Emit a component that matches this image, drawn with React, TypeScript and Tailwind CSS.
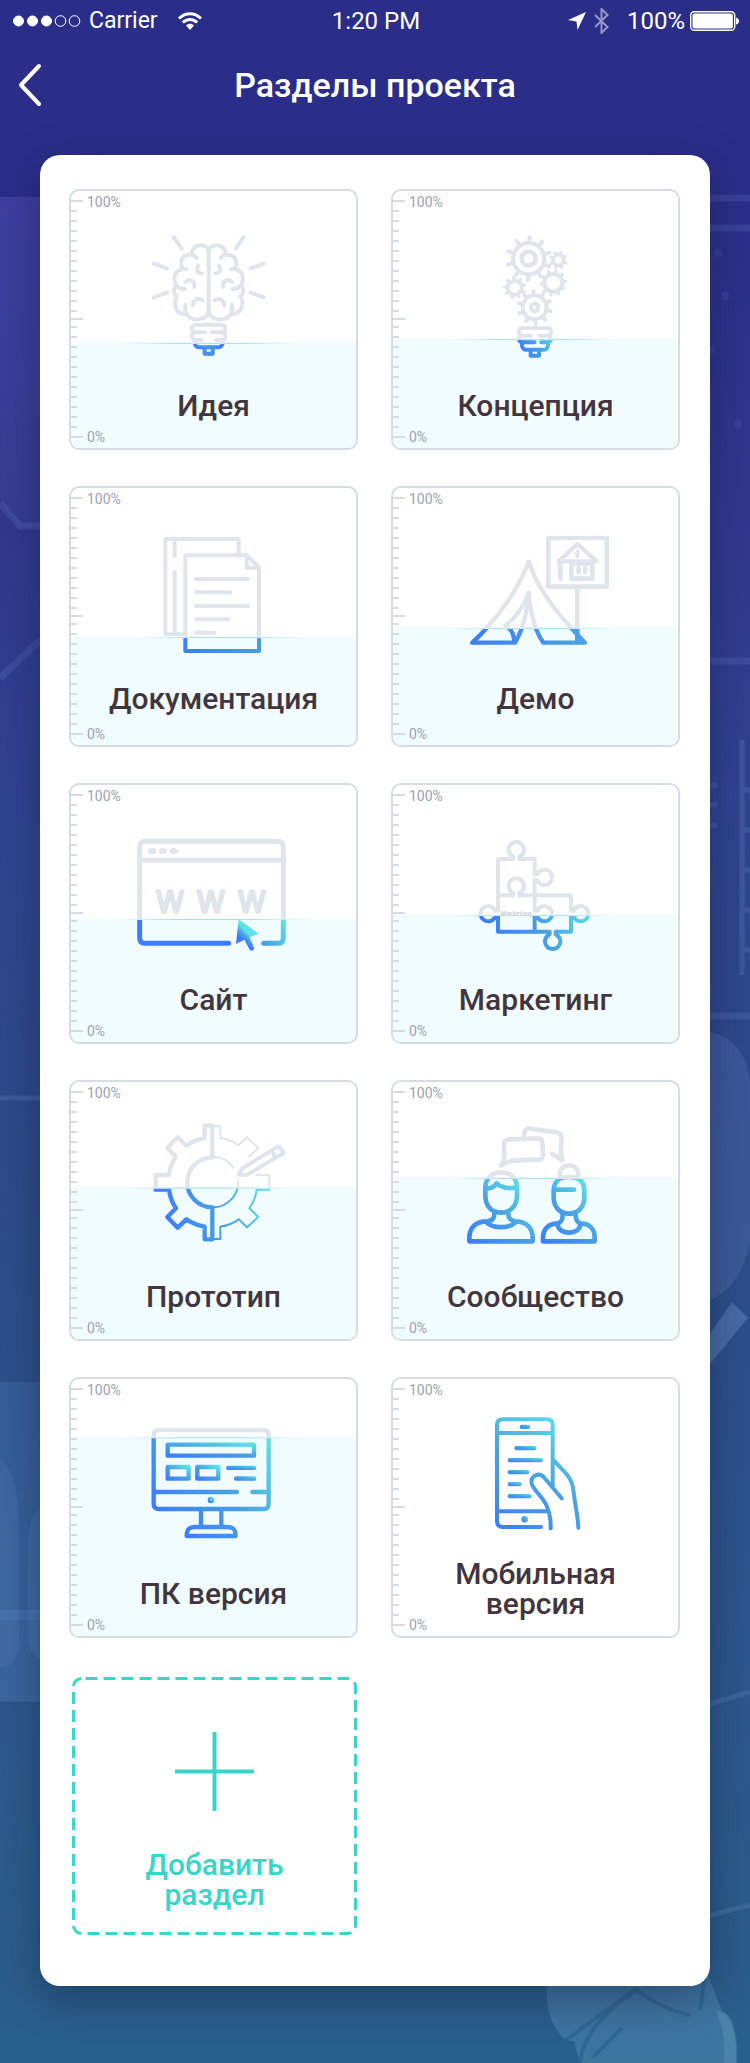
import React from "react";

const GREY = "#e0e5eb";
const BLUE = "#3d7dfb";
const CYAN = "#5ce3e6";

type Box = [number, number, number, number];

function Stops() {
  return (
    <>
      <stop offset="0" stopColor={BLUE} />
      <stop offset="0.5" stopColor="#4aa0e2" />
      <stop offset="1" stopColor={CYAN} />
    </>
  );
}

interface ArtworkProps {
  id: string;
  view: Box;
  className: string;
  level?: number;
  line?: [number, number];
  ramp: Box;
  width?: number;
  art: React.ReactNode;
  children?: React.ReactNode;
}

/** An outline drawing: grey above the water level, blue-to-cyan below it. */
function Artwork({ id, view, className, level, line, ramp, width = 12, art, children }: ArtworkProps) {
  const [x, y, w, h] = view;
  const surface = level ?? y;
  return (
    <svg
      viewBox={view.join(" ")}
      preserveAspectRatio="xMidYMin meet"
      className={"relative block w-full shrink-0 " + className}
      fill="none"
      strokeLinecap="round"
      strokeLinejoin="round"
      aria-hidden="true"
    >
      <defs>
        <linearGradient id={id + "-ink"} gradientUnits="userSpaceOnUse" x1={ramp[0]} y1={ramp[1]} x2={ramp[2]} y2={ramp[3]}>
          <Stops />
        </linearGradient>
        <linearGradient id={id + "-glow"}>
          <stop offset="0" stopColor="#a5e2f4" stopOpacity="0" />
          <stop offset="0.3" stopColor="#a5e2f4" />
          <stop offset="0.7" stopColor="#a5e2f4" />
          <stop offset="1" stopColor="#a5e2f4" stopOpacity="0" />
        </linearGradient>
        <clipPath id={id + "-dry"}>
          <rect x={x} y={y} width={w} height={surface - y} />
        </clipPath>
        <clipPath id={id + "-wet"}>
          <rect x={x} y={surface} width={w} height={y + h - surface} />
        </clipPath>
      </defs>
      {line && <rect x={line[0]} y={surface - 3} width={line[1] - line[0]} height="3" fill={`url(#${id}-glow)`} />}
      <g clipPath={`url(#${id}-dry)`} stroke={GREY} strokeWidth={width}>
        {art}
      </g>
      <g clipPath={`url(#${id}-wet)`} stroke={`url(#${id}-ink)`} strokeWidth={width}>
        {art}
      </g>
      {children}
    </svg>
  );
}

function Teeth({ cx, cy, from, to, count, turn = 0 }: { cx: number; cy: number; from: number; to: number; count: number; turn?: number }) {
  const d = Array.from({ length: count }, (_, i) => {
    const a = ((turn + (360 / count) * i - 90) * Math.PI) / 180;
    const c = Math.cos(a);
    const s = Math.sin(a);
    return `M${cx + from * c} ${cy + from * s}L${cx + to * c} ${cy + to * s}`;
  }).join("");
  return <path d={d} />;
}

function BrainHalf() {
  return (
    <path d="M506 243C501 221 460 217 455 250M470 264C460 249 424 250 423 280C423 291 430 298 439 298M424 299C401 304 399 330 409 344C414 353 424 357 435 357M408 346C399 356 400 370 411 379M409 380C400 400 404 431 436 433M436 404C434 420 437 432 444 438C462 455 503 452 506 420M475 287C467 301 473 310 486 310M436 336C450 325 466 334 463 351M459 406C458 390 474 382 488 391M401 201L425 236M341 281L381 295M341 382L381 368M506 464H466Q456 464 456 475Q456 486 466 487H496M466 487Q456 489 456 499Q456 510 466 510H485M464 512Q463 532 478 532H506M494 537V551H506" />
  );
}

function IdeaArt() {
  return (
    <Artwork
      id="idea"
      view={[93, 63, 855, 600]}
      className="h-[200px]"
      level={522}
      line={[256, 756]}
      ramp={[462, 552, 590, 500]}
      art={
        <>
          <BrainHalf />
          <g transform="translate(1012 0) scale(-1 1)">
            <BrainHalf />
          </g>
          <path d="M506 240V424" />
        </>
      }
    />
  );
}

function ConceptArt() {
  return (
    <Artwork
      id="concept"
      view={[39, 63, 855, 600]}
      className="h-[200px]"
      level={510}
      line={[210, 710]}
      ramp={[425, 560, 530, 500]}
      art={
        <>
          <circle cx="446" cy="266" r="47" />
          <circle cx="446" cy="266" r="21" strokeWidth="14" />
          <Teeth cx={446} cy={266} from={50} to={65} count={10} turn={2} />
          <circle cx="535" cy="270" r="16" strokeWidth="11" />
          <g strokeWidth="10">
            <Teeth cx={535} cy={270} from={18} to={24} count={8} turn={20} />
          </g>
          <circle cx="520" cy="338" r="27" />
          <g strokeWidth="10">
            <Teeth cx={520} cy={338} from={30} to={37} count={10} turn={12} />
          </g>
          <circle cx="404" cy="353" r="21" />
          <g strokeWidth="10">
            <Teeth cx={404} cy={353} from={24} to={30} count={9} turn={-5} />
          </g>
          <circle cx="464" cy="412" r="36" />
          <circle cx="464" cy="412" r="11" strokeWidth="13" />
          <Teeth cx={464} cy={412} from={38} to={49} count={10} turn={-4} />
          <path d="M465 474H427Q417 474 417 485Q417 496 427 497H453M465 474H503Q513 474 513 485Q513 496 503 497H477M427 497Q417 499 417 507Q418 517 430 517H464M503 497Q513 499 513 507Q512 517 500 517H484M426 517Q424 538 437 539H493Q506 538 504 517M452 543V557H477V543" />
        </>
      }
    />
  );
}

function DocsArt() {
  return (
    <Artwork
      id="docs"
      view={[93, 54, 855, 588]}
      className="h-[196px]"
      level={504}
      line={[298, 790]}
      ramp={[436, 560, 840, 330]}
      art={
        <>
          <path d="M596 252V207H376V493H432M404 210V258M404 306V490" />
          <path d="M436 256H620L657 293V543H436Z" />
          <path d="M620 256V293H657M468 327H624M468 367H571M468 408H624M468 448H565M468 488H524" />
        </>
      }
    />
  );
}

function DemoArt() {
  return (
    <Artwork
      id="demo"
      view={[39, 54, 855, 588]}
      className="h-[196px]"
      level={477}
      line={[208, 704]}
      ramp={[290, 540, 850, 330]}
      width={13}
      art={
        <>
          <path d="M446 275C418 350 360 440 277 518H405C428 480 441 430 446 368C451 430 463 480 490 518H615C540 440 478 370 446 275Z" />
          <path d="M446 368C430 410 405 445 376 467C394 476 402 492 403 516" />
          <path d="M505 204H680V350H505ZM592 352V516" strokeWidth="14" />
          <path d="M592 222L536 274H650ZM592 245V258" />
          <path d="M541 278V326M574 280H637V326H574ZM596 294V306M615 294V306" strokeWidth="14" />
        </>
      }
    />
  );
}

function SiteArt() {
  return (
    <Artwork
      id="site"
      view={[93, 45, 855, 600]}
      className="h-[200px]"
      level={450}
      line={[230, 810]}
      ramp={[590, 540, 735, 450]}
      width={15}
      art={
        <>
          <path d="M566 520H315Q299 520 299 504V230Q299 214 315 214H714Q730 214 730 230V504Q730 520 714 520H671M299 271H730" />
          <path d="M332 243H340M365 243H373M397 243H405" strokeWidth="17" />
        </>
      }
    >
      <defs>
        <linearGradient id="site-arrow" gradientUnits="userSpaceOnUse" x1="600" y1="502" x2="618" y2="484">
          <Stops />
        </linearGradient>
      </defs>
      <g
        fill={GREY}
        stroke={GREY}
        strokeWidth="10"
        fontSize="116"
        fontWeight="200"
        textAnchor="middle"
        style={{ fontFamily: '"DejaVu Sans", sans-serif' }}
      >
        <text x="392" y="426">w</text>
        <text x="514" y="426">w</text>
        <text x="637" y="426">w</text>
      </g>
      <path d="M596 448L656 491L629 502L641 530A7 7 0 0 1 628 538L613 509L588 522Z" fill="url(#site-arrow)" />
    </Artwork>
  );
}

function MarketingArt() {
  return (
    <Artwork
      id="marketing"
      view={[39, 45, 855, 600]}
      className="h-[200px]"
      level={438}
      line={[214, 714]}
      ramp={[340, 520, 640, 410]}
      art={
        <>
          <path d="M354 376V267H400V260A23 23 0 1 1 418 260V267H464V313H472A23 23 0 1 1 472 331H464V376" />
          <path d="M354 376H400V369A23 23 0 1 1 418 369V376H573V422H581A23 23 0 1 1 581 440H573V485H527V493A23 23 0 1 1 509 493V485H354V440H346A23 23 0 1 1 346 422H354Z" />
          <path d="M464 376V422H472A23 23 0 1 1 472 440H464V485" />
        </>
      }
    >
      <text
        x="408"
        y="437"
        fontSize="18"
        fontWeight="900"
        fill="#d3dae2"
        textAnchor="middle"
        style={{ fontFamily: "Inter, sans-serif" }}
      >
        Marketing
      </text>
    </Artwork>
  );
}

function PrototypeArt() {
  return (
    <Artwork
      id="prototype"
      view={[93, 36, 855, 600]}
      className="h-[200px]"
      level={356}
      line={[254, 754]}
      ramp={[375, 470, 690, 350]}
      width={13}
      art={
        <>
          <path d="M517 166H494V204C472 208 455 216 439 227L413 202L382 233L407 260C396 277 389 295 387 315H347V359H387C390 380 396 398 408 415L382 441L413 473L439 448C455 458 472 466 494 470V508H517M517 166V262A75 75 0 0 0 517 412V508" />
          <path
            d="M517 168H541V204C560 207 580 215 596 226L621 202L655 234L627 260M649 315H688V359H650C648 380 640 398 628 415L655 441L621 472L596 448C580 460 560 467 541 470V507H517M517 261C542 260 566 272 580 293M594 332A75 75 0 0 1 517 412"
            strokeWidth="6"
          />
          <path d="M596 314L606 296L713 230Q717 228 720 232L731 249L622 314ZM694 242L706 262" strokeWidth="12" />
        </>
      }
    />
  );
}

function CommunityArt() {
  const woman = (
    <>
      <path d="M567 321C598 321 613 336 613 362V382C613 414 592 431 567 431S521 414 521 382V362C521 336 538 321 567 321ZM525 359H582M540 316C536 276 598 276 594 316" />
      <path d="M548 434C548 448 546 458 530 461C505 461 489 478 489 503V514H644V503C644 478 630 461 604 461C590 458 587 448 587 434M532 464C540 496 594 496 602 464" />
    </>
  );
  return (
    <Artwork
      id="community"
      view={[39, 36, 855, 600]}
      className="h-[200px]"
      level={327}
      line={[200, 710]}
      ramp={[270, 514, 430, 330]}
      width={14}
      art={
        <>
          <path d="M363 307C393 307 411 325 411 355V375C411 410 390 428 363 428S316 410 316 375V355C316 325 335 307 363 307ZM316 354C332 358 341 352 350 340C362 352 385 356 411 353" />
          <path d="M343 430C343 444 340 451 322 454C285 454 268 474 268 505V514H458V505C458 474 440 454 405 454C390 451 385 444 385 430M320 457C338 476 388 476 406 457" />
          <path d="M385 209L472 205Q486 205 487 218L489 252Q489 268 475 269L405 271Q385 273 364 287Q374 268 373 255L372 225Q372 210 385 209ZM432 200C432 180 438 175 448 176L530 187Q545 190 545 205C543 225 540 245 547 271Q532 261 516 252" />
        </>
      }
    >
      <defs>
        <linearGradient id="woman-ink" gradientUnits="userSpaceOnUse" x1="495" y1="514" x2="635" y2="345">
          <Stops />
        </linearGradient>
      </defs>
      <g clipPath="url(#community-dry)" stroke={GREY} strokeWidth="14">
        {woman}
      </g>
      <g clipPath="url(#community-wet)" stroke="url(#woman-ink)" strokeWidth="14">
        {woman}
      </g>
    </Artwork>
  );
}

function DesktopArt() {
  return (
    <Artwork
      id="desktop"
      view={[6, 6, 855, 600]}
      className="h-[200px]"
      level={184}
      line={[166, 700]}
      ramp={[300, 440, 600, 180]}
      width={13}
      art={
        <>
          <path d="M270 159H583Q599 159 599 175V380Q599 396 583 396H270Q254 396 254 380V175Q254 159 270 159ZM254 345H504M550 345H599" />
          <path d="M396 398V446M457 398V446M353 477C353 455 362 450 380 450H473C491 450 500 455 500 477Z" />
        </>
      }
    >
      <defs>
        <linearGradient id="desktop-part" x1="0" y1="1" x2="1" y2="0">
          <Stops />
        </linearGradient>
      </defs>
      <g stroke="url(#desktop-part)" strokeWidth="13">
        <rect x="296" y="203" width="259" height="33" />
        <rect x="296" y="270" width="63" height="35" />
        <rect x="385" y="270" width="63" height="35" />
        <circle cx="426" cy="369" r="6" strokeWidth="8" />
      </g>
      <g fill="url(#desktop-part)">
        <rect x="471" y="266" width="91" height="13" rx="6" />
        <rect x="495" y="298" width="67" height="13" rx="6" />
      </g>
    </Artwork>
  );
}

function MobileArt() {
  return (
    <Artwork
      id="mobile"
      view={[6, 6, 855, 540]}
      className="h-[180px]"
      ramp={[300, 450, 530, 130]}
      art={
        <path d="M450 450H336Q318 450 318 432V145Q318 127 336 127H467Q485 127 485 145V328M318 168H485M318 403H466M512 364L460 302C445 284 417 296 422 320C425 335 450 355 464 380C476 405 480 425 479 454M487 249L525 289C540 306 546 320 548 345C552 385 560 410 562 452" />
      }
    >
      <defs>
        <linearGradient id="mobile-part" x1="0" y1="1" x2="1" y2="0">
          <Stops />
        </linearGradient>
      </defs>
      <g fill="url(#mobile-part)">
        <rect x="386" y="143" width="32" height="13" rx="6" />
        <rect x="370" y="207" width="66" height="13" rx="6" />
        <rect x="350" y="243" width="106" height="13" rx="6" />
        <rect x="350" y="279" width="65" height="13" rx="6" />
        <rect x="350" y="315" width="42" height="13" rx="6" />
        <rect x="350" y="351" width="72" height="13" rx="6" />
        <circle cx="401" cy="427" r="10" />
      </g>
    </Artwork>
  );
}

interface Section {
  title: string;
  water: number;
  Art: () => React.ReactElement;
}

const SECTIONS: Section[] = [
  { title: "Идея", water: 106, Art: IdeaArt },
  { title: "Концепция", water: 109, Art: ConceptArt },
  { title: "Документация", water: 108, Art: DocsArt },
  { title: "Демо", water: 118, Art: DemoArt },
  { title: "Сайт", water: 123, Art: SiteArt },
  { title: "Маркетинг", water: 127, Art: MarketingArt },
  { title: "Прототип", water: 152, Art: PrototypeArt },
  { title: "Сообщество", water: 162, Art: CommunityArt },
  { title: "ПК версия", water: 199, Art: DesktopArt },
  { title: "Мобильная версия", water: 0, Art: MobileArt },
];

const TICKS = [
  ...Array.from({ length: 12 }, (_, i) => 10 + i * 10),
  ...Array.from({ length: 12 }, (_, i) => 136 + i * 10),
];

function Ruler() {
  return (
    <>
      <svg className="absolute top-0 left-0 h-[257px] w-3" stroke="#d6dce1" strokeWidth="2" aria-hidden="true">
        {TICKS.map((y, i) => (
          <path key={y} d={`M0 ${y}H${i === 0 || i === TICKS.length - 1 ? 12 : 6}`} />
        ))}
        <path d="M0 128H12" />
      </svg>
      <span className="absolute top-[3px] left-4 text-sm leading-4 text-[#9aa2af]">100%</span>
      <span className="absolute bottom-[3px] left-4 text-sm leading-4 text-[#9aa2af]">0%</span>
    </>
  );
}

function SectionCard({ title, water, Art }: Section) {
  return (
    <a
      href="#section"
      className="relative flex h-[261px] flex-col items-center overflow-hidden rounded-[10px] border-2 border-[#d6dce1] bg-white"
    >
      <span className="absolute inset-x-0 bottom-0 bg-[#f0fcff]" style={{ height: water }} />
      <Ruler />
      <Art />
      <span className="relative max-w-[220px] text-center text-[30px] leading-[30px] font-medium text-[#43353e]">{title}</span>
    </a>
  );
}

function AddCard() {
  return (
    <button
      type="button"
      className="relative mt-[3px] mr-px ml-[3px] flex h-[258px] flex-col items-center gap-[39px] pt-[55px] text-[#38d6c9]"
    >
      <svg className="absolute inset-0 h-full w-full" fill="none" stroke="currentColor" strokeWidth="3" aria-hidden="true">
        <rect x="1.5" y="1.5" rx="8" className="h-[calc(100%-3px)] w-[calc(100%-3px)]" strokeDasharray="12 6" strokeDashoffset="-4" />
      </svg>
      <svg className="size-[79px]" viewBox="0 0 79 79" stroke="currentColor" strokeWidth="4" aria-hidden="true">
        <path d="M39.5 0V79M0 39.5H79" />
      </svg>
      <span className="max-w-[160px] text-center text-[30px] leading-[30px] font-medium">Добавить раздел</span>
    </button>
  );
}

function StatusBar() {
  return (
    <div className="grid h-[42px] grid-cols-[1fr_auto_1fr] items-center pr-[11px] pl-[13px] text-2xl">
      <div className="flex items-center">
        <svg className="h-3 w-[68px]" viewBox="0 0 68 12" fill="none" stroke="currentColor" aria-hidden="true">
          <g fill="currentColor">
            <circle cx="5.5" cy="6" r="5" />
            <circle cx="19.5" cy="6" r="5" />
            <circle cx="33.5" cy="6" r="5" />
          </g>
          <circle cx="47.5" cy="6" r="5.3" />
          <circle cx="61.5" cy="6" r="5.3" />
        </svg>
        <span className="ml-2 text-[23px]">Carrier</span>
        <svg className="ml-5 h-[18px] w-6" viewBox="0 0 24 18" fill="none" stroke="currentColor" strokeWidth="3" aria-hidden="true">
          <path d="M1 6.5C7.500 0 16.500 0 23 6.500M4.800 10.500C9 6.400 15 6.400 19.200 10.500" />
          <path d="M8 13.500C10.500 11.300 13.500 11.300 16 13.500L12 18Z" fill="currentColor" stroke="none" />
        </svg>
      </div>
      <span>1:20 PM</span>
      <div className="flex items-center justify-end">
        <svg className="h-[18px] w-[18px]" viewBox="0 0 18 18" fill="currentColor" aria-hidden="true">
          <path d="M18 0L9.500 18L8.500 9.500L0 8Z" />
        </svg>
        <svg className="mr-[18px] ml-2 h-[26px] w-[15px] opacity-50" viewBox="0 0 15 26" fill="none" stroke="currentColor" strokeWidth="2" aria-hidden="true">
          <path d="M1 7L13.500 19L7.500 25V1L13.500 7L1 19" />
        </svg>
        <span>100%</span>
        <svg className="ml-[5px] h-5 w-[49px]" viewBox="0 0 49 20" fill="none" aria-hidden="true">
          <rect x="0.7" y="0.7" width="44" height="18.600" rx="3.500" stroke="currentColor" strokeWidth="1.400" />
          <rect x="2.500" y="2.500" width="40.400" height="15" rx="2" fill="currentColor" />
          <path d="M46 6.500Q49 7.500 49 10T46 13.500Z" fill="currentColor" />
        </svg>
      </div>
    </div>
  );
}

function Backdrop() {
  return (
    <svg
      className="absolute inset-0 h-full w-full"
      viewBox="0 0 750 2063"
      preserveAspectRatio="none"
      fill="none"
      aria-hidden="true"
    >
      <defs>
        <linearGradient id="haze" x1="0" y1="0" x2="0" y2="1">
          <stop offset="0" stopColor="#5a57c0" stopOpacity="0.4" />
          <stop offset="1" stopColor="#5a6cc0" stopOpacity="0.1" />
        </linearGradient>
      </defs>
      <path d="M0 197H60V528H20L0 500Z" fill="url(#haze)" />
      <g stroke="#6f7fd0" strokeOpacity="0.22" strokeWidth="7">
        <path d="M0 503L20 526H60M0 678L60 622M700 198H750M700 228H750M700 661H750M700 1016H750" />
      </g>
      <g stroke="#7aa0d8" strokeOpacity="0.2" strokeWidth="5">
        <path d="M0 1098H60M0 1699H60M700 1707L750 1692M700 1918L750 1905" />
        <path d="M742 740V975M750 790H742M750 830H742M750 870H742M750 910H742M750 950H742M709 785H717M709 805H717M709 825H717" />
      </g>
      <g fill="#6f7fd0" fillOpacity="0.14">
        <circle cx="718" cy="253" r="4" />
        <circle cx="725" cy="296" r="4" />
        <circle cx="711" cy="350" r="4" />
        <circle cx="738" cy="424" r="4" />
      </g>
      <path d="M0 1382H60V1620H0Z" fill="#5b8fd0" fillOpacity="0.2" />
      <path d="M0 1610H60V1697H0Z" fill="#5b8fd0" fillOpacity="0.26" />
      <path d="M0 1460C16 1470 19 1500 19 1530V1640C19 1658 10 1668 0 1668ZM28 1540Q30 1505 50 1505V1662Q30 1660 28 1640Z" fill="#7fa6dc" fillOpacity="0.12" />
      <path d="M690 1030C740 1030 750 1060 752 1100V1230C745 1280 725 1300 690 1306Z" fill="#7a93d8" fillOpacity="0.2" />
      <path d="M700 1348L732 1302L748 1318L700 1376Z" fill="#8db4e6" fillOpacity="0.28" />
      <path d="M547 1980C544 2010 554 2030 566 2041H574L580 2063H737C738 2030 732 2014 722 2011L706 1970Z" fill="#4f86b0" fillOpacity="0.55" />
      <path d="M580 2063C584 2030 610 2008 637 1990C660 2008 680 2012 690 2016M566 2041C590 2020 615 2006 636 1988M592 2058L622 2028M706 1970L700 2010" stroke="#2c5f8c" strokeOpacity="0.6" strokeWidth="4" />
      <path d="M716 2011C732 2012 737 2034 736 2063H724C726 2040 722 2024 716 2011Z" fill="#7fb0cc" fillOpacity="0.25" />
    </svg>
  );
}

export default function App() {
  return (
    <div className="relative min-h-screen bg-[linear-gradient(180deg,#2b2e89_0%,#2b2e89_9%,#30388f_25%,#30448f_40%,#2d4c88_58%,#2c578c_80%,#295f8b_100%)] pb-[77px] font-['Roboto','Noto_Sans',sans-serif] text-white">
      <Backdrop />
      <div className="relative">
        <StatusBar />
        <header className="mb-[27px] grid h-[86px] grid-cols-[60px_1fr_60px] items-center">
          <button type="button" aria-label="Назад" className="flex h-full items-center pl-[18px]">
            <svg className="h-11 w-6" viewBox="0 0 24 44" fill="none" stroke="currentColor" strokeWidth="4" strokeLinecap="round" strokeLinejoin="round" aria-hidden="true">
              <path d="M21 3L3 22L21 41" />
            </svg>
          </button>
          <h1 className="text-center text-[34px] leading-10 font-medium">Разделы проекта</h1>
        </header>
        <main className="mx-10 grid grid-cols-2 gap-x-[33px] gap-y-9 rounded-[20px] bg-white pt-[34px] pr-[30px] pb-[51px] pl-[29px] shadow-[0_12px_40px_rgba(15,20,50,0.4)]">
          {SECTIONS.map((s) => (
            <SectionCard key={s.title} {...s} />
          ))}
          <AddCard />
        </main>
      </div>
    </div>
  );
}
